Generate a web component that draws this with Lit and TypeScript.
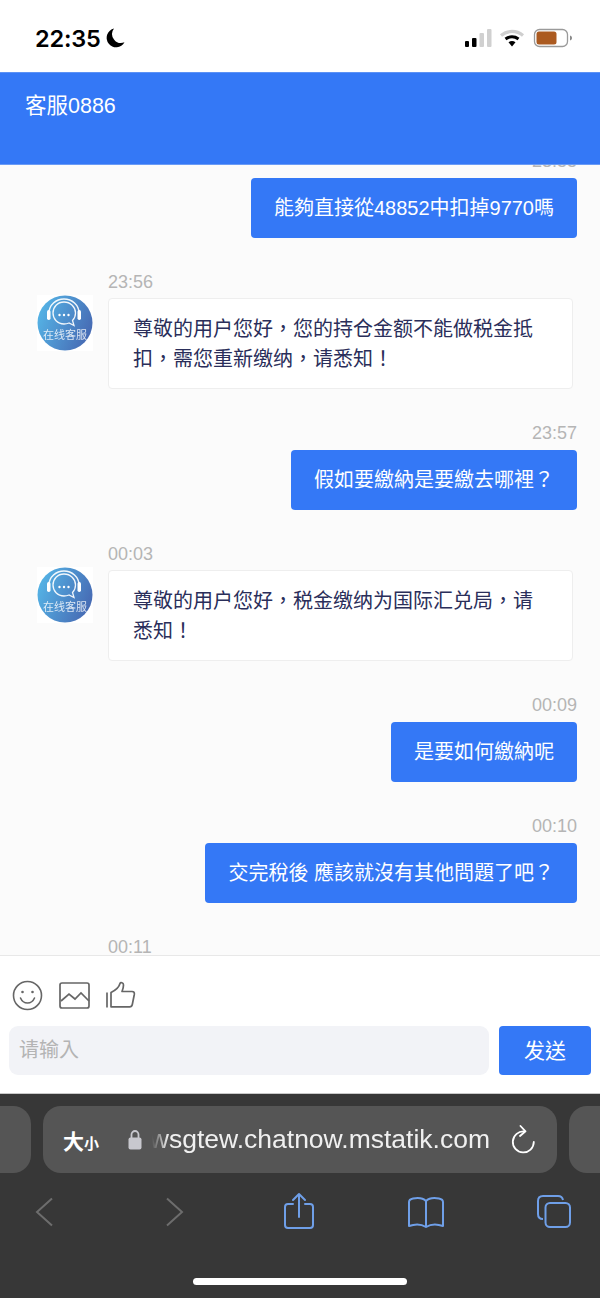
import { LitElement, css, html, svg } from "lit";
import { customElement } from "lit/decorators.js";

type Message = {
  side: "in" | "out";
  time: string;
  text: string;
};

const MESSAGES: Message[] = [
  { side: "out", time: "23:55", text: "能夠直接從48852中扣掉9770嗎" },
  { side: "in", time: "23:56", text: "尊敬的用户您好，您的持仓金额不能做税金抵扣，需您重新缴纳，请悉知！" },
  { side: "out", time: "23:57", text: "假如要繳納是要繳去哪裡？" },
  { side: "in", time: "00:03", text: "尊敬的用户您好，税金缴纳为国际汇兑局，请悉知！" },
  { side: "out", time: "00:09", text: "是要如何繳納呢" },
  { side: "out", time: "00:10", text: "交完稅後 應該就沒有其他問題了吧？" },
  { side: "in", time: "00:11", text: "" },
];

const avatar = svg`
  <svg class="avatar-art" viewBox="0 0 56 56" width="56" height="56">
    <defs>
      <linearGradient id="av" x1="0" y1="0.3" x2="1" y2="0.7">
        <stop offset="0" stop-color="#55b4e6" />
        <stop offset="1" stop-color="#4668b2" />
      </linearGradient>
    </defs>
    <circle cx="28" cy="28" r="27.500" fill="url(#av)" />
    <g fill="none" stroke="#fff" stroke-opacity=".92">
      <path d="M12 18C12 10 19 4 27 4s15 6 15 14" stroke-width="1.500" />
      <path d="M27 7c-6.500 0-11 5-11 11s4.500 11 11 11c2 0 3.500-.4 5-1l5 2.500-1.500-5c2-2 3-4.500 3-7.500C38.500 12 33.500 7 27 7z" stroke-width="1.300" />
    </g>
    <rect x="10" y="15" width="3.500" height="10" rx="1.700" fill="#fff" />
    <rect x="40.500" y="15" width="3.500" height="10" rx="1.700" fill="#fff" />
    <g fill="#fff"><circle cx="22.500" cy="20" r="1.200" /><circle cx="27" cy="20" r="1.200" /><circle cx="31.500" cy="20" r="1.200" /></g>
  </svg>
`;

@customElement("app-root")
export class AppRoot extends LitElement {
  static styles = css`
    :host {
      display: flex;
      flex-direction: column;
      height: 1298px;
      overflow: hidden;
      background: #fff;
      font-family: "Liberation Sans", "Noto Sans CJK TC", sans-serif;
    }

    svg {
      display: block;
      flex: none;
    }

    .status {
      height: 72px;
      flex: none;
      display: flex;
      justify-content: space-between;
      align-items: center;
      padding: 4px 28px 0 35px;
      box-sizing: border-box;
    }

    .clock {
      display: flex;
      align-items: center;
      gap: 5px;
      font-family: Inter, sans-serif;
      font-size: 23.500px;
      font-weight: 600;
      letter-spacing: -0.2px;
      color: #000;
    }

    .header {
      height: 93px;
      flex: none;
      box-sizing: border-box;
      padding: 20px 25px 0;
      background: #3478f6;
      border-top: 1px solid #5c92f5;
      border-bottom: 1px solid #6a9bf5;
      color: #fff;
      font-size: 21.500px;
      line-height: 26px;
    }

    .chat {
      flex: 1;
      min-height: 0;
      overflow: hidden;
      background: #fbfbfb;
    }

    .scroll {
      display: flex;
      flex-direction: column;
      gap: 32px;
      margin-top: -16px;
      padding: 0 23px 0 37px;
    }

    .msg {
      display: flex;
      gap: 15px;
    }

    .msg.out {
      justify-content: flex-end;
    }

    .avatar {
      width: 56px;
      height: 56px;
      flex: none;
      margin-top: 25px;
      position: relative;
      background: #fff;
    }

    .avatar span {
      position: absolute;
      left: 0;
      right: 0;
      top: 33px;
      text-align: center;
      font-size: 11px;
      line-height: 14px;
      color: #fff;
      opacity: 0.8;
      white-space: nowrap;
    }

    .body {
      display: flex;
      flex-direction: column;
      min-width: 0;
    }

    .out .body {
      align-items: flex-end;
    }

    .time {
      height: 24px;
      margin-bottom: 5px;
      font-size: 18px;
      line-height: 24px;
      color: #b5b5b5;
    }

    .in .time {
      margin-bottom: 4px;
    }

    .bubble {
      box-sizing: border-box;
      border-radius: 4px;
      font-size: 20px;
      line-height: 30px;
    }

    .out .bubble {
      padding: 15px 23px;
      background: #3478f6;
      color: #fff;
      white-space: nowrap;
    }

    .in .bubble {
      width: 465px;
      padding: 15px 25px 14px 24px;
      background: #fff;
      border: 1px solid #eeeeee;
      color: #2a2e5a;
    }

    .composer {
      height: 139px;
      flex: none;
      box-sizing: border-box;
      background: #fff;
      border-top: 1px solid #e8e8e8;
      border-bottom: 1px solid #c9c9c9;
      padding: 24px 9px 0;
    }

    .tools {
      display: flex;
      align-items: center;
      gap: 16px;
      height: 30px;
      padding-left: 3px;
      margin-bottom: 16px;
    }

    .send-row {
      display: flex;
      gap: 10px;
    }

    .input {
      flex: 1;
      height: 49px;
      box-sizing: border-box;
      padding-left: 10px;
      background: #f2f3f7;
      border-radius: 9px;
      font-size: 20px;
      line-height: 49px;
      color: #b4b4b4;
    }

    .send {
      width: 92px;
      height: 49px;
      background: #3478f6;
      border-radius: 4px;
      color: #fff;
      font-size: 21px;
      line-height: 49px;
      text-align: center;
    }

    .browser {
      height: 204px;
      flex: none;
      box-sizing: border-box;
      background: #373737;
      padding-top: 12px;
      display: flex;
      flex-direction: column;
    }

    .tabs {
      display: grid;
      grid-template-columns: 31px minmax(0, 1fr) 31px;
      gap: 12px;
      height: 67px;
    }

    .pill {
      background: #555555;
      border-radius: 0 18px 18px 0;
    }

    .pill.right {
      border-radius: 18px 0 0 18px;
    }

    .url {
      display: flex;
      align-items: center;
      background: #555555;
      border-radius: 18px;
      padding: 0 22px 0 20px;
      color: #fff;
    }

    .size {
      font-size: 21px;
      font-weight: 700;
      width: 65px;
      flex: none;
      white-space: nowrap;
    }

    .size small {
      font-size: 15px;
    }

    .host {
      flex: 1;
      min-width: 0;
      margin: 0 21px 0 10px;
      display: flex;
      justify-content: flex-end;
      overflow: hidden;
      font-size: 26.500px;
      white-space: nowrap;
      color: #f0f0f0;
      -webkit-mask-image: linear-gradient(90deg, transparent 0, #000 16px);
      mask-image: linear-gradient(90deg, transparent 0, #000 16px);
    }

    .nav {
      display: flex;
      justify-content: space-between;
      align-items: center;
      height: 40px;
      margin-top: 19px;
      padding: 0 29px 0 26px;
    }

    .nav svg {
      width: 36px;
      height: 40px;
    }

    .home-bar {
      width: 214px;
      height: 7px;
      margin: 46px auto 0;
      border-radius: 4px;
      background: #fff;
    }
  `;

  private renderMessage(m: Message) {
    if (m.side === "out") {
      return html`<div class="msg out">
        <div class="body">
          <div class="time">${m.time}</div>
          <div class="bubble">${m.text}</div>
        </div>
      </div>`;
    }
    return html`<div class="msg in">
      <div class="avatar">${avatar}<span>在线客服</span></div>
      <div class="body">
        <div class="time">${m.time}</div>
        ${m.text ? html`<div class="bubble">${m.text}</div>` : ""}
      </div>
    </div>`;
  }

  render() {
    return html`
      <div class="status">
        <div class="clock">
          22:35
          <svg width="20" height="22" viewBox="0 0 20 22">
            <path d="M8 1.500a9.500 9.500 0 1 0 10.500 13.800A9 9 0 0 1 8 1.500z" fill="#000" />
          </svg>
        </div>
        <svg width="107" height="20" viewBox="0 0 107 20">
          <g>
            <rect x="0" y="13" width="4" height="6" rx="1" fill="#000" />
            <rect x="7" y="10" width="4.500" height="9" rx="1" fill="#000" />
            <rect x="14.500" y="5" width="4.500" height="14" rx="1" fill="#d0d0d0" />
            <rect x="22" y="1" width="4.500" height="18" rx="1" fill="#d0d0d0" />
          </g>
          <path d="M36 7.500a17 17 0 0 1 22 0" fill="none" stroke="#cfcfcf" stroke-width="3.200" />
          <path d="M40.500 11a11 11 0 0 1 13 0" fill="none" stroke="#000" stroke-width="3" />
          <path d="M43.500 14.300a6 6 0 0 1 7 0L47 18.500z" fill="#000" />
          <rect x="69.500" y="1.500" width="33" height="17" rx="5" fill="none" stroke="#9a9a9a" stroke-width="1.300" />
          <rect x="71.500" y="3.500" width="20" height="13" rx="2.500" fill="#ab5a20" />
          <path d="M105 7.500c1.500.5 2 1.500 2 2.500s-.5 2-2 2.500z" fill="#8a8a8a" />
        </svg>
      </div>

      <div class="header">客服0886</div>

      <div class="chat">
        <div class="scroll">${MESSAGES.map((m) => this.renderMessage(m))}</div>
      </div>

      <div class="composer">
        <div class="tools">
          <svg width="31" height="31" viewBox="0 0 31 31" fill="none" stroke="#666" stroke-width="1.600">
            <circle cx="15.500" cy="15.500" r="14" />
            <path d="M8.500 18c1.500 3.500 4 5 7 5s5.500-1.500 7-5" stroke-linecap="round" />
            <circle cx="10.500" cy="12" r="1.300" fill="#666" stroke="none" />
            <circle cx="20.500" cy="12" r="1.300" fill="#666" stroke="none" />
          </svg>
          <svg width="31" height="27" viewBox="0 0 31 27" fill="none" stroke="#666" stroke-width="1.700">
            <rect x="1" y="1" width="29" height="25" rx="2" />
            <path d="M2 19l8-7 6 5 6-6 8 8" />
          </svg>
          <svg width="30" height="28" viewBox="0 0 30 28" fill="none" stroke="#666" stroke-width="1.700">
            <path d="M1 11.500v15" />
            <path d="M5 11.500c4-2 8-5 9-9 .5-1.500 3.500-1 3.500 1.500 0 2-.7 4.500-1.500 6.500h10c2 0 2.600 1.200 2.300 3l-2 10c-.3 1.500-1 2.300-2.600 2.300H5z" stroke-linejoin="round" />
          </svg>
        </div>
        <div class="send-row">
          <div class="input">请输入</div>
          <div class="send">发送</div>
        </div>
      </div>

      <div class="browser">
        <div class="tabs">
          <div class="pill"></div>
          <div class="url">
            <div class="size">大<small>小</small></div>
            <svg width="14" height="21" viewBox="0 0 14 21">
              <path d="M3.500 9V5.500a3.500 3.500 0 0 1 7 0V9" fill="none" stroke="#c8c8ce" stroke-width="1.800" />
              <rect x="0.500" y="8.500" width="13" height="12" rx="2" fill="#c8c8ce" />
            </svg>
            <div class="host">wsgtew.chatnow.mstatik.com</div>
            <svg width="24" height="29" viewBox="0 0 24 29" fill="none" stroke="#fff" stroke-width="1.800">
              <path d="M13.500 6.500A10.500 10.500 0 1 0 22.800 17" stroke-linecap="round" />
              <path d="M9.500 1l5 5.300-5.500 4.700" stroke-linecap="round" stroke-linejoin="round" />
            </svg>
          </div>
          <div class="pill right"></div>
        </div>

        <div class="nav">
          <svg viewBox="0 0 36 40" fill="none" stroke="#6d6d6d" stroke-width="2">
            <path d="M26 6.500L11 20l15 13.500" />
          </svg>
          <svg viewBox="0 0 36 40" fill="none" stroke="#6d6d6d" stroke-width="2">
            <path d="M14 6.500L29 20 14 33.500" />
          </svg>
          <svg viewBox="0 0 36 40" fill="none" stroke="#6f9fe8" stroke-width="2">
            <path d="M12 12H7c-2 0-3 1-3 3v18c0 2 1 3 3 3h22c2 0 3-1 3-3V15c0-2-1-3-3-3h-5" stroke-linecap="round" />
            <path d="M18 25V2M12 8l6-6 6 6" stroke-linecap="round" stroke-linejoin="round" />
          </svg>
          <svg viewBox="0 0 36 40" fill="none" stroke="#6f9fe8" stroke-width="2">
            <path d="M18 9c-3-3-8-3.500-13-2.500-2 .4-4 1.500-4 3.500v24c5.500-2 11.500-2.500 17 1 5.500-3.500 11.500-3 17-1V10c0-2-2-3.100-4-3.500C26 5.500 21 6 18 9z" stroke-linejoin="round" />
            <path d="M18 9v26" />
          </svg>
          <svg viewBox="0 0 36 40" fill="none" stroke="#6f9fe8" stroke-width="2">
            <path d="M8 27c-3 0-5-2-5-5V9c0-3 2-5 5-5h15c3 0 4.500 1.500 5 4" />
            <rect x="10.500" y="11" width="24.500" height="24" rx="4.500" />
          </svg>
        </div>
        <div class="home-bar"></div>
      </div>
    `;
  }
}

declare global {
  interface HTMLElementTagNameMap {
    "app-root": AppRoot;
  }
}
